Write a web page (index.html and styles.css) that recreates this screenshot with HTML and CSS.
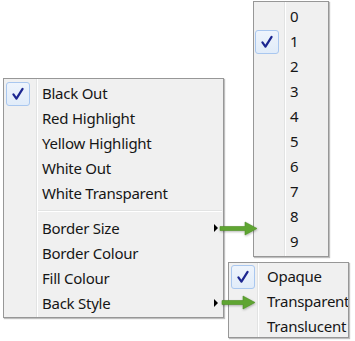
FILE: index.html
```html
<!DOCTYPE html>
<html>
<head>
<meta charset="utf-8">
<link rel="stylesheet" href="styles.css">
</head>
<body>
<div class="canvas">
  <div class="menu main">
    <div class="item"><span class="check on"><svg viewBox="0 0 24 24"><path d="M7 12.5 L10.3 17 L17 6.5"/></svg></span><span class="label">Black Out</span></div>
    <div class="item"><span class="check"></span><span class="label">Red Highlight</span></div>
    <div class="item"><span class="check"></span><span class="label">Yellow Highlight</span></div>
    <div class="item"><span class="check"></span><span class="label">White Out</span></div>
    <div class="item"><span class="check"></span><span class="label">White Transparent</span></div>
    <div class="sep"></div>
    <div class="item sub"><span class="check"></span><span class="label">Border Size</span></div>
    <div class="item"><span class="check"></span><span class="label">Border Colour</span></div>
    <div class="item"><span class="check"></span><span class="label">Fill Colour</span></div>
    <div class="item sub"><span class="check"></span><span class="label">Back Style</span></div>
  </div>

  <div class="menu nums">
    <div class="item"><span class="check"></span><span class="label">0</span></div>
    <div class="item"><span class="check on"><svg viewBox="0 0 24 24"><path d="M7 12.5 L10.3 17 L17 6.5"/></svg></span><span class="label">1</span></div>
    <div class="item"><span class="check"></span><span class="label">2</span></div>
    <div class="item"><span class="check"></span><span class="label">3</span></div>
    <div class="item"><span class="check"></span><span class="label">4</span></div>
    <div class="item"><span class="check"></span><span class="label">5</span></div>
    <div class="item"><span class="check"></span><span class="label">6</span></div>
    <div class="item"><span class="check"></span><span class="label">7</span></div>
    <div class="item"><span class="check"></span><span class="label">8</span></div>
    <div class="item"><span class="check"></span><span class="label">9</span></div>
  </div>

  <div class="menu back">
    <div class="item"><span class="check on"><svg viewBox="0 0 24 24"><path d="M7 12.5 L10.3 17 L17 6.5"/></svg></span><span class="label">Opaque</span></div>
    <div class="item"><span class="check"></span><span class="label">Transparent</span></div>
    <div class="item"><span class="check"></span><span class="label">Translucent</span></div>
  </div>

  <svg class="arrows" width="355" height="341" viewBox="0 0 355 341">
    <defs>
      <filter id="sh" x="-10%" y="-30%" width="130%" height="180%">
        <feDropShadow dx="0.5" dy="1" stdDeviation="0.8" flood-color="#000" flood-opacity="0.3"/>
      </filter>
    </defs>
    <polygon filter="url(#sh)" points="220,226.5 245,226.5 245,222 257,228.5 245,235 245,230.5 220,230.5"/>
    <polygon filter="url(#sh)" points="222,300.5 243,300.5 243,296 255,302.5 243,309 243,304.5 222,304.5"/>
  </svg>
</div>
</body>
</html>
```

FILE: styles.css
```css
html, body {
  margin: 0;
  padding: 0;
  background: #ffffff;
}

.canvas {
  position: relative;
  width: 355px;
  height: 341px;
  overflow: hidden;
  font-family: "Noto Sans", "Open Sans", sans-serif;
  font-size: 15px;
  letter-spacing: -0.25px;
  color: #161616;
}

.menu {
  position: absolute;
  box-sizing: border-box;
  background: #f0f0f0;
  border: 1px solid #979797;
  box-shadow: 1px 1px 1px rgba(0, 0, 0, 0.25);
  padding: 2px 0;
}

.menu::before {
  content: "";
  position: absolute;
  top: 0;
  bottom: 0;
  left: var(--gut-x);
  width: 1px;
  background: #e2e3e3;
  box-shadow: 1px 0 0 #ffffff;
}

.main {
  left: 3px;
  top: 78px;
  width: 221px;
  padding-bottom: 1px;
  --box-x: 2px;
  --gut-x: 32px;
  --text-x: 38px;
}

.nums {
  left: 253px;
  top: 1px;
  width: 76px;
  --box-x: 1px;
  --gut-x: 30px;
  --text-x: 36px;
}

.back {
  left: 228px;
  top: 262px;
  width: 121px;
  height: 76px;
  overflow: hidden;
  padding-top: 1px;
  --box-x: 2px;
  --gut-x: 28px;
  --text-x: 38px;
}

.item {
  position: relative;
  display: flex;
  align-items: center;
  height: 25px;
  padding-left: var(--box-x);
  white-space: nowrap;
}

.check {
  flex: none;
  width: 24px;
  height: 24px;
  box-sizing: border-box;
}

.check.on {
  border: 1px solid #a9c7ef;
  border-radius: 3px;
  background: linear-gradient(#eef4fc, #e1ecf9);
}

.check svg {
  display: block;
  width: 22px;
  height: 22px;
}

.check svg path {
  fill: none;
  stroke: #1c2690;
  stroke-width: 2.4;
  stroke-linecap: round;
  stroke-linejoin: round;
}

.label {
  margin-left: calc(var(--text-x) - var(--box-x) - 24px);
  line-height: 25px;
}

.sep {
  height: 10px;
  margin-left: calc(var(--gut-x) + 2px);
  margin-right: 1px;
  position: relative;
}

.sep::after {
  content: "";
  position: absolute;
  left: 0;
  right: 0;
  top: 4px;
  height: 1px;
  background: #e2e3e3;
  box-shadow: 0 1px 0 #ffffff;
}

.item.sub::after {
  content: "";
  position: absolute;
  right: 5px;
  top: 8px;
  border-left: 4px solid #000000;
  border-top: 4px solid transparent;
  border-bottom: 4px solid transparent;
}

.arrows {
  position: absolute;
  left: 0;
  top: 0;
  pointer-events: none;
}

.arrows polygon {
  fill: #5fa531;
  stroke: #4e8d25;
  stroke-width: 0.6;
}
```
